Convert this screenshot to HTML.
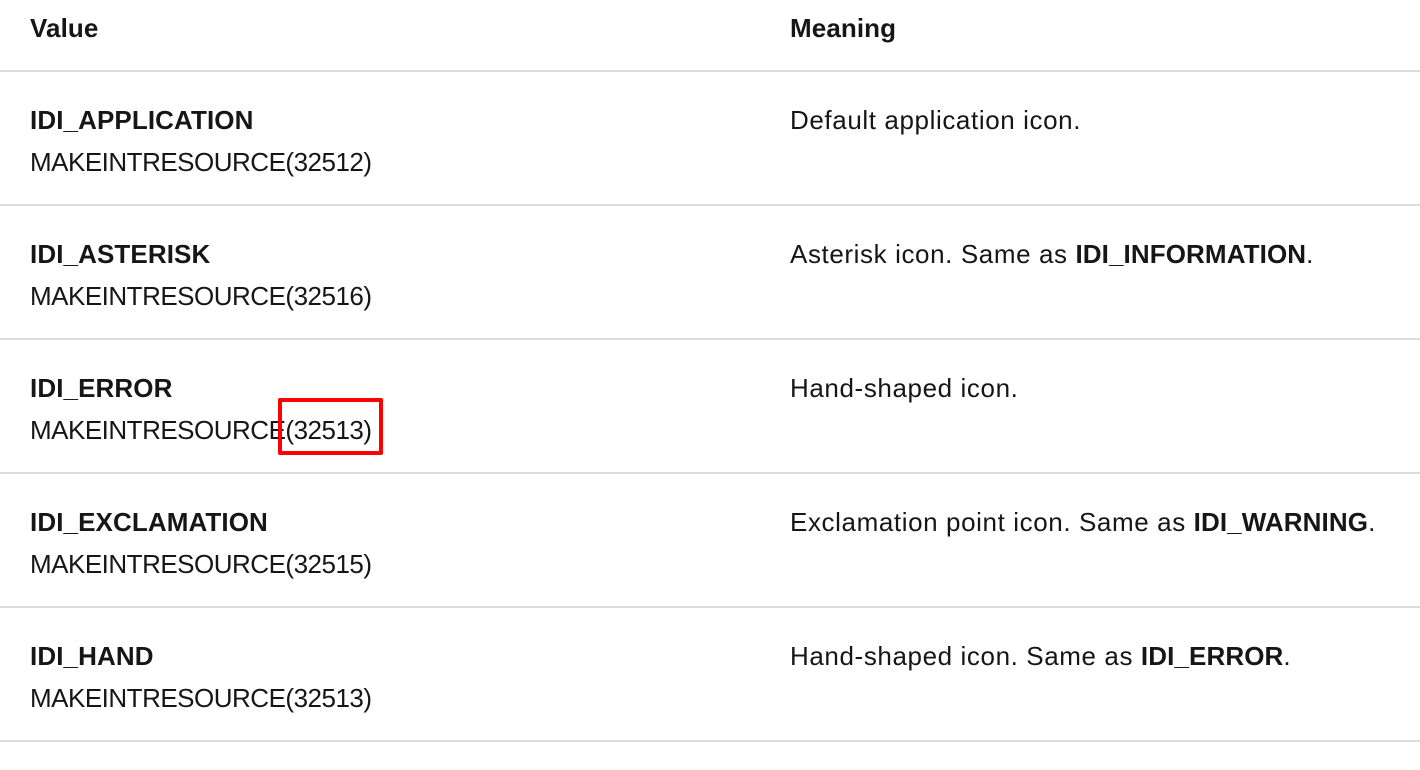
<!DOCTYPE html>
<html><head><style>
body{margin:0;width:1420px;height:770px;background:#fff;font-family:"Liberation Sans",sans-serif;color:#161616;position:relative;overflow:hidden}
.t{position:absolute;font-size:26px;letter-spacing:0.6px;white-space:nowrap;line-height:30px}
.c{letter-spacing:-0.5px}
b{font-weight:bold;letter-spacing:0.1px}
.hr{position:absolute;left:0;width:1420px;height:2px;background:#dcdcdc}
.box{position:absolute;left:278px;top:398px;width:97px;height:49px;border:4px solid #f00;border-radius:2px}
</style></head><body>
<div class="t" style="left:30px;top:13px"><b>Value</b></div>
<div class="t" style="left:790px;top:13px"><b>Meaning</b></div>
<div class="hr" style="top:70px"></div>

<div class="t" style="left:30px;top:105px"><b>IDI_APPLICATION</b></div>
<div class="t c" style="left:30px;top:147px">MAKEINTRESOURCE(32512)</div>
<div class="t" style="left:790px;top:105px">Default application icon.</div>
<div class="hr" style="top:204px"></div>

<div class="t" style="left:30px;top:239px"><b>IDI_ASTERISK</b></div>
<div class="t c" style="left:30px;top:281px">MAKEINTRESOURCE(32516)</div>
<div class="t" style="left:790px;top:239px">Asterisk icon. Same as <b>IDI_INFORMATION</b>.</div>
<div class="hr" style="top:338px"></div>

<div class="t" style="left:30px;top:373px"><b>IDI_ERROR</b></div>
<div class="t c" style="left:30px;top:415px">MAKEINTRESOURCE(32513)</div>
<div class="t" style="left:790px;top:373px">Hand-shaped icon.</div>
<div class="box"></div>
<div class="hr" style="top:472px"></div>

<div class="t" style="left:30px;top:507px"><b>IDI_EXCLAMATION</b></div>
<div class="t c" style="left:30px;top:549px">MAKEINTRESOURCE(32515)</div>
<div class="t" style="left:790px;top:507px">Exclamation point icon. Same as <b>IDI_WARNING</b>.</div>
<div class="hr" style="top:606px"></div>

<div class="t" style="left:30px;top:641px"><b>IDI_HAND</b></div>
<div class="t c" style="left:30px;top:683px">MAKEINTRESOURCE(32513)</div>
<div class="t" style="left:790px;top:641px">Hand-shaped icon. Same as <b>IDI_ERROR</b>.</div>
<div class="hr" style="top:740px"></div>
</body></html>
